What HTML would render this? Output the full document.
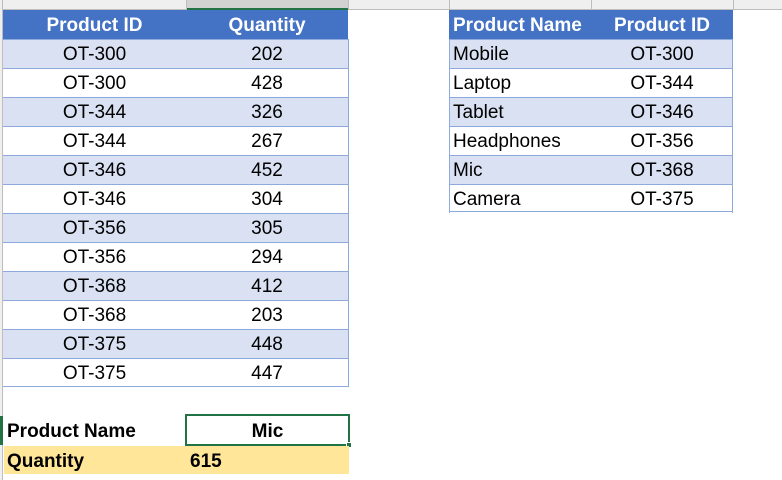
<!DOCTYPE html>
<html><head><meta charset="utf-8"><style>
*{margin:0;padding:0;box-sizing:border-box}
body{width:782px;height:480px;background:#fff;position:relative;overflow:hidden;font-family:"Liberation Sans",Arial,sans-serif;font-size:19px;color:#000}
.a{position:absolute}
.c{position:absolute;height:29px;line-height:32px;white-space:nowrap}
.hd{background:#4472c4;color:#fff;font-weight:bold}
.b1{background:#d9e1f2}
.ctr{text-align:center}
</style></head><body>
<div class="a" style="left:0;top:0;width:782px;height:10px;background:#efefef;border-bottom:1px solid #bdbdbd"></div>
<div class="a" style="left:186px;top:0;width:163px;height:10px;background:#d2d2d2;border-bottom:2px solid #217346"></div>
<div class="a" style="left:186px;top:0;width:1px;height:10px;background:#bdbdbd"></div>
<div class="a" style="left:348px;top:0;width:1px;height:10px;background:#bdbdbd"></div>
<div class="a" style="left:449px;top:0;width:1px;height:10px;background:#bdbdbd"></div>
<div class="a" style="left:591px;top:0;width:1px;height:10px;background:#bdbdbd"></div>
<div class="a" style="left:733px;top:0;width:1px;height:10px;background:#bdbdbd"></div>
<div class="a" style="left:0;top:0;width:3px;height:480px;background:#efefef;border-right:1px solid #bdbdbd"></div>
<div class="a" style="left:0;top:416px;width:3px;height:29px;background:#217346"></div>

<div id="t1"></div>
<div id="t2"></div>
<script>
var d=[["OT-300",202],["OT-300",428],["OT-344",326],["OT-344",267],["OT-346",452],["OT-346",304],["OT-356",305],["OT-356",294],["OT-368",412],["OT-368",203],["OT-375",448],["OT-375",447]];
var h='<div class="c hd" style="left:3px;top:10px;width:345px"></div>';
h+='<div class="c hd ctr" style="left:3px;top:10px;width:183px">Product ID</div><div class="c hd ctr" style="left:186px;top:10px;width:162px">Quantity</div>';
d.forEach(function(r,i){var t=39+29*i;var bg=i%2==0?'b1':'';
h+='<div class="c '+bg+'" style="left:3px;top:'+t+'px;width:346px;border-top:1px solid #8ea9db;border-right:1px solid #8ea9db"></div>';
h+='<div class="c ctr" style="left:3px;top:'+t+'px;width:183px">'+r[0]+'</div><div class="c ctr" style="left:186px;top:'+t+'px;width:162px">'+r[1]+'</div>';});
h+='<div class="a" style="left:3px;top:386px;width:346px;height:1px;background:#8ea9db"></div>';
document.getElementById('t1').innerHTML=h;
var e=[["Mobile","OT-300"],["Laptop","OT-344"],["Tablet","OT-346"],["Headphones","OT-356"],["Mic","OT-368"],["Camera","OT-375"]];
h='<div class="c hd" style="left:449px;top:10px;width:284px"></div><div class="c hd" style="left:453px;top:10px">Product Name</div><div class="c hd ctr" style="left:591px;top:10px;width:142px">Product ID</div>';
e.forEach(function(r,i){var t=39+29*i;var bg=i%2==0?'b1':'';
h+='<div class="c '+bg+'" style="left:449px;top:'+t+'px;width:284px;border-top:1px solid #8ea9db;border-left:1px solid #8ea9db;border-right:1px solid #8ea9db"></div>';
h+='<div class="c" style="left:453px;top:'+t+'px">'+r[0]+'</div><div class="c ctr" style="left:591px;top:'+t+'px;width:142px">'+r[1]+'</div>';});
h+='<div class="a" style="left:449px;top:211px;width:284px;height:1px;background:#8ea9db"></div>';
document.getElementById('t2').innerHTML=h;
</script>
<div class="c" style="left:7px;top:416px;font-weight:bold">Product Name</div>
<div class="a" style="left:185px;top:414px;width:165px;height:32px;border:2px solid #217346"></div>
<div class="a" style="left:346px;top:442px;width:6px;height:6px;background:#217346;border:1px solid #fff"></div>
<div class="c ctr" style="left:186px;top:416px;width:163px;font-weight:bold">Mic</div>
<div class="a" style="left:4px;top:446px;width:345px;height:28px;background:#ffe699"></div>
<div class="c" style="left:7px;top:446px;font-weight:bold">Quantity</div>
<div class="c" style="left:190px;top:446px;font-weight:bold">615</div>
</body></html>
